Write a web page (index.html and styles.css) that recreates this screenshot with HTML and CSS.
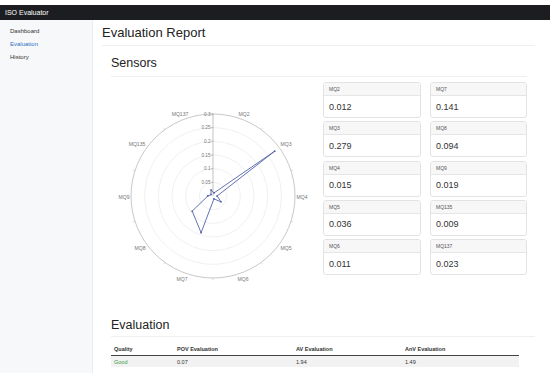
FILE: index.html
```html
<!DOCTYPE html>
<html lang="en">
<head>
  <meta charset="UTF-8">
  <meta name="viewport" content="width=device-width, initial-scale=1.0">
  <title>ISO Evaluator</title>
  <link rel="stylesheet" href="styles.css">
</head>
<body>
  <header class="topbar">
    <span class="brand">ISO Evaluator</span>
  </header>

  <div class="layout">
    <nav class="sidebar">
      <a href="#" class="nav-link">Dashboard</a>
      <a href="#" class="nav-link active">Evaluation</a>
      <a href="#" class="nav-link">History</a>
    </nav>

    <main class="content">
      <h1 class="page-title">Evaluation Report</h1>

      <section class="section">
        <h2 class="section-title">Sensors</h2>
        <div class="sensors">
          <svg class="radar" width="205" height="220" viewBox="0 0 205 220">
            <g fill="none" stroke="#e6e6e6" stroke-width="0.6">
              <circle cx="102" cy="114" r="13.67"/>
              <circle cx="102" cy="114" r="27.33"/>
              <circle cx="102" cy="114" r="41"/>
              <circle cx="102" cy="114" r="54.67"/>
              <circle cx="102" cy="114" r="68.33"/>
            </g>
            <circle cx="102" cy="114" r="82" fill="none" stroke="#b0b0b0" stroke-width="0.7"/>
            <!-- small marks on the outer ring, one per segment -->
            <g stroke="#c4c4c4" stroke-width="0.6">
              <line x1="102" y1="31" x2="102" y2="34"/>
              <line x1="150.2" y1="47.7" x2="151.4" y2="45.9"/>
              <line x1="180" y1="88.7" x2="182.1" y2="88"/>
              <line x1="180" y1="139.3" x2="182.1" y2="140"/>
              <line x1="150.2" y1="180.3" x2="151.4" y2="182.1"/>
              <line x1="102" y1="196" x2="102" y2="198"/>
              <line x1="53.8" y1="180.3" x2="52.6" y2="182.1"/>
              <line x1="24" y1="139.3" x2="21.9" y2="140"/>
              <line x1="24" y1="88.7" x2="21.9" y2="88"/>
              <line x1="53.8" y1="47.7" x2="52.6" y2="45.9"/>
            </g>
            <line x1="102" y1="114" x2="102" y2="32" stroke="#9a9a9a" stroke-width="0.6"/>
            <g stroke="#9a9a9a" stroke-width="0.6">
              <line x1="100" y1="100.33" x2="102" y2="100.33"/>
              <line x1="100" y1="86.67" x2="102" y2="86.67"/>
              <line x1="100" y1="73" x2="102" y2="73"/>
              <line x1="100" y1="59.33" x2="102" y2="59.33"/>
              <line x1="100" y1="45.67" x2="102" y2="45.67"/>
              <line x1="100" y1="32" x2="102" y2="32"/>
            </g>
            <g class="tick-label" text-anchor="end">
              <text x="99.5" y="101.9">0.05</text>
              <text x="99.5" y="88.2">0.1</text>
              <text x="99.5" y="74.6">0.15</text>
              <text x="99.5" y="60.9">0.2</text>
              <text x="99.5" y="47.2">0.25</text>
              <text x="99.5" y="33.6">0.3</text>
            </g>
            <polygon points="103,110.9 163.7,69.2 106.1,114 110,119.8 102.9,116.9 90.1,150.7 81.2,129.1 96.8,114 100,112.6 100.1,108" fill="none" stroke="#5063a8" stroke-width="0.9" stroke-linejoin="round"/>
            <g fill="#5063a8">
              <circle cx="103" cy="110.9" r="0.9"/>
              <circle cx="163.7" cy="69.2" r="0.9"/>
              <circle cx="106.1" cy="114" r="0.9"/>
              <circle cx="110" cy="119.8" r="0.9"/>
              <circle cx="102.9" cy="116.9" r="0.9"/>
              <circle cx="90.1" cy="150.7" r="0.9"/>
              <circle cx="81.2" cy="129.1" r="0.9"/>
              <circle cx="96.8" cy="114" r="0.9"/>
              <circle cx="100" cy="112.6" r="0.9"/>
              <circle cx="100.1" cy="108" r="0.9"/>
            </g>
            <g class="axis-label" text-anchor="middle">
              <text x="133" y="33.8">MQ2</text>
              <text x="175" y="63.8">MQ3</text>
              <text x="191" y="116.8">MQ4</text>
              <text x="175" y="167.8">MQ5</text>
              <text x="132" y="198.8">MQ6</text>
              <text x="71" y="198.8">MQ7</text>
              <text x="29" y="167.8">MQ8</text>
              <text x="13" y="116.8">MQ9</text>
              <text x="26" y="63.8">MQ135</text>
              <text x="69" y="33.8">MQ137</text>
            </g>
          </svg>

          <div class="cards">
            <div class="card"><div class="card-header">MQ2</div><div class="card-body">0.012</div></div>
            <div class="card"><div class="card-header">MQ3</div><div class="card-body">0.279</div></div>
            <div class="card"><div class="card-header">MQ4</div><div class="card-body">0.015</div></div>
            <div class="card"><div class="card-header">MQ5</div><div class="card-body">0.036</div></div>
            <div class="card"><div class="card-header">MQ6</div><div class="card-body">0.011</div></div>
            <div class="card"><div class="card-header">MQ7</div><div class="card-body">0.141</div></div>
            <div class="card"><div class="card-header">MQ8</div><div class="card-body">0.094</div></div>
            <div class="card"><div class="card-header">MQ9</div><div class="card-body">0.019</div></div>
            <div class="card"><div class="card-header">MQ135</div><div class="card-body">0.009</div></div>
            <div class="card"><div class="card-header">MQ137</div><div class="card-body">0.023</div></div>
          </div>
        </div>
      </section>

      <section class="section section-wide">
        <h2 class="section-title eval-title">Evaluation</h2>
        <table class="eval-table">
          <thead>
            <tr>
              <th class="col-quality">Quality</th>
              <th class="col-pov">POV Evaluation</th>
              <th class="col-av">AV Evaluation</th>
              <th>AnV Evaluation</th>
            </tr>
          </thead>
          <tbody>
            <tr>
              <td class="good">Good</td>
              <td>0.07</td>
              <td>1.94</td>
              <td>1.49</td>
            </tr>
          </tbody>
        </table>
      </section>
    </main>
  </div>
</body>
</html>
```

FILE: styles.css
```css
body {
  margin: 0;
  padding-top: 5px;
  background-color: #fff;
  color: #222;
  font-family: 'Liberation Sans', Arial, sans-serif;
  overflow: hidden;
}

.topbar {
  height: 15px;
  background-color: #1c1d20;
  display: flex;
  align-items: center;
  padding-left: 5px;
}

.brand {
  color: #fff;
  font-size: 7px;
}

.layout {
  display: flex;
  min-height: 353px;
}

.sidebar {
  width: 93px;
  flex-shrink: 0;
  background-color: #f7f8fa;
  border-right: 1px solid #ececec;
  padding-top: 4.5px;
  box-sizing: border-box;
}

.nav-link {
  display: block;
  padding-left: 10px;
  line-height: 13px;
  font-size: 6px;
  color: #333;
  text-decoration: none;
}

.nav-link.active {
  color: #2f6fc4;
}

.content {
  flex: 1;
  padding: 0 15px 0 9px;
}

.page-title {
  margin: 5px 0 0;
  padding-bottom: 4px;
  font-size: 13px;
  line-height: 16px;
  font-weight: 500;
  color: #222;
  border-bottom: 1px solid #efefef;
}

.section {
  padding: 0 8px 0 9px;
}

.section-wide {
  padding-right: 0;
}

.section-title {
  margin: 10px 0 0;
  padding-bottom: 6px;
  font-size: 12.5px;
  line-height: 14px;
  font-weight: 500;
  color: #222;
  border-bottom: 1px solid #efefef;
}

.eval-title {
  margin-top: 16px;
  padding-bottom: 4px;
}

.sensors {
  display: flex;
  gap: 7px;
  margin-top: 5px;
}

.radar {
  display: block;
  flex-shrink: 0;
}

.tick-label {
  font-size: 4.7px;
  fill: #777;
}

.axis-label {
  font-size: 5.1px;
  fill: #777;
}

.cards {
  display: grid;
  grid-template-columns: 98px 97px;
  grid-template-rows: repeat(5, 36px);
  grid-auto-flow: column;
  column-gap: 9px;
  row-gap: 3.25px;
  align-self: flex-start;
}

.card {
  display: flex;
  flex-direction: column;
  border: 1px solid #e3e3e3;
  border-radius: 3px;
  overflow: hidden;
  background-color: #fff;
}

.card-header {
  height: 12px;
  padding: 0 5px;
  background-color: #f7f7f7;
  border-bottom: 1px solid #e6e6e6;
  font-size: 5px;
  line-height: 12px;
  color: #555;
}

.card-body {
  flex: 1;
  display: flex;
  align-items: center;
  padding: 0 5px;
  font-size: 9px;
  color: #333;
}

.eval-table {
  margin-top: 6px;
  width: 408px;
  border-collapse: collapse;
  font-size: 5.5px;
  color: #333;
}

.eval-table th {
  height: 12px;
  padding: 0 3px;
  text-align: left;
  font-weight: bold;
  border-bottom: 1.5px solid #444;
}

.eval-table td {
  height: 11px;
  padding: 0 3px;
  background-color: #f2f2f2;
}

.col-quality {
  width: 57px;
}

.col-pov {
  width: 113px;
}

.col-av {
  width: 103px;
}

.good {
  color: #3c9a4a;
}
```
